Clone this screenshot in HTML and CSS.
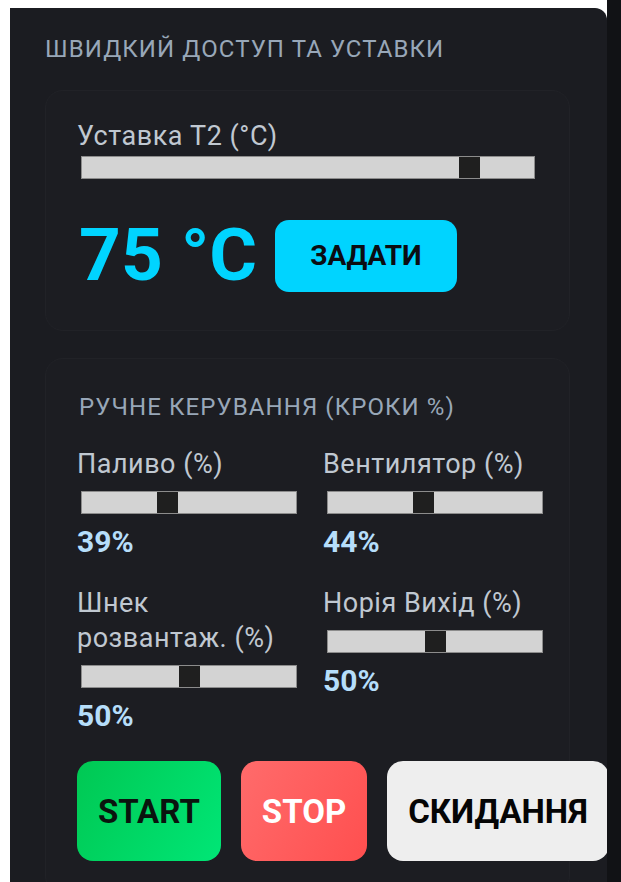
FILE: index.html
```html
<!DOCTYPE html>
<html lang="uk">
<head>
<meta charset="utf-8">
<title>Швидкий доступ та уставки</title>
<link rel="stylesheet" href="styles.css">
</head>
<body>
<div class="page">
  <section class="panel">
    <h2 class="panel-title">ШВИДКИЙ ДОСТУП ТА УСТАВКИ</h2>

    <div class="card setpoint">
      <label class="field-label" for="t2">Уставка T2 (°C)</label>
      <input id="t2" class="slider" type="range" min="40" max="80" value="75">
      <div class="setpoint-row">
        <span class="setpoint-value">75 °C</span>
        <button class="btn btn-set" type="button">ЗАДАТИ</button>
      </div>
    </div>

    <div class="card manual">
      <h3 class="card-title">РУЧНЕ КЕРУВАННЯ (КРОКИ %)</h3>
      <div class="controls">
        <div class="control">
          <label class="field-label" for="fuel">Паливо (%)</label>
          <input id="fuel" class="slider" type="range" min="0" max="100" value="39">
          <span class="control-value">39%</span>
        </div>
        <div class="control">
          <label class="field-label" for="fan">Вентилятор (%)</label>
          <input id="fan" class="slider" type="range" min="0" max="100" value="44">
          <span class="control-value">44%</span>
        </div>
        <div class="control">
          <label class="field-label" for="auger">Шнек розвантаж. (%)</label>
          <input id="auger" class="slider" type="range" min="0" max="100" value="50">
          <span class="control-value">50%</span>
        </div>
        <div class="control">
          <label class="field-label" for="elevator">Норія Вихід (%)</label>
          <input id="elevator" class="slider" type="range" min="0" max="100" value="50">
          <span class="control-value">50%</span>
        </div>
      </div>
      <div class="actions">
        <button class="btn btn-action btn-start" type="button">START</button>
        <button class="btn btn-action btn-stop" type="button">STOP</button>
        <button class="btn btn-action btn-reset" type="button">СКИДАННЯ</button>
      </div>
    </div>
  </section>
  <div class="edge"></div>
</div>
</body>
</html>
```

FILE: styles.css
```css
html,
body {
  margin: 0;
  height: 100%;
  overflow: hidden;
  background: #ffffff;
}

.page {
  display: flex;
  height: 100%;
  padding-left: 10px;
  box-sizing: border-box;
  font-family: Roboto, "Noto Sans", sans-serif;
}

/* main dark panel */
.panel {
  flex: 0 0 597px;
  box-sizing: border-box;
  margin-top: 8px;
  padding: 28px 37px 0 35px;
  background: #1b1c21;
  border-top-right-radius: 12px;
  display: flex;
  flex-direction: column;
}

/* darker strip on the right */
.edge {
  flex: 1;
  background: #111215;
}

.panel-title,
.card-title {
  margin: 0;
  font-size: 24px;
  line-height: 26px;
  font-weight: 400;
  letter-spacing: 1.1px;
  color: #98a7b8;
}

.card {
  box-sizing: border-box;
  width: 525px;
  background: #1c1d22;
  border: 1px solid #212227;
  border-radius: 18px;
}

.setpoint {
  margin-top: 28px;
  padding: 28px 32px 38px 31px;
  display: flex;
  flex-direction: column;
}

.field-label {
  display: block;
  font-size: 27px;
  line-height: 35px;
  letter-spacing: 0.5px;
  color: #c0c8d1;
}

/* range sliders: flat light track, dark square thumb */
.slider {
  -webkit-appearance: none;
  appearance: none;
  display: block;
  box-sizing: border-box;
  width: calc(100% - 6px);
  height: 23px;
  margin: 0 2px 0 4px;
  padding: 0;
  background: #d3d3d3;
  border: 1px solid #8c8c8c;
  border-radius: 0;
  outline: none;
}

.slider::-webkit-slider-runnable-track {
  height: 21px;
  background: transparent;
  border: none;
}

.slider::-webkit-slider-thumb {
  -webkit-appearance: none;
  appearance: none;
  width: 21px;
  height: 21px;
  background: #1f1f1f;
  border: none;
  border-radius: 0;
}

.setpoint .slider {
  margin-top: 2px;
}

.setpoint-row {
  display: flex;
  align-items: center;
  gap: 18px;
  margin-top: 40px;
  padding-left: 2px;
}

.setpoint-value {
  font-size: 73px;
  line-height: 73px;
  font-weight: 700;
  color: #00d4ff;
}

.btn {
  border: none;
  font-family: Roboto, "Noto Sans", sans-serif;
  font-weight: 700;
  cursor: pointer;
}

.btn-set {
  height: 72px;
  padding: 0 35px;
  border-radius: 14px;
  background: #00d4ff;
  color: #0b0d12;
  font-size: 28px;
}

.manual {
  margin-top: 27px;
  padding: 35px 32px 32px 31px;
}

.card-title {
  padding-left: 2px;
}

.controls {
  display: grid;
  grid-template-columns: 222px 222px;
  column-gap: 24px;
  row-gap: 27px;
  margin-top: 27px;
}

.control {
  display: flex;
  flex-direction: column;
}

.control .slider {
  margin-top: 9px;
}

.control-value {
  margin-top: 11px;
  font-size: 30px;
  line-height: 34px;
  font-weight: 700;
  color: #b6defa;
}

.actions {
  display: flex;
  gap: 20px;
  margin-top: 28px;
}

.btn-action {
  flex: none;
  height: 100px;
  padding: 0 21px;
  border-radius: 16px;
  font-size: 33px;
}

.btn-start {
  background: linear-gradient(120deg, #00c853, #00e676);
  color: #0a140e;
}

.btn-stop {
  background: linear-gradient(120deg, #ff6b6b, #ff4f4f);
  color: #ffffff;
}

.btn-reset {
  background: #eeeeee;
  color: #050505;
}
```
